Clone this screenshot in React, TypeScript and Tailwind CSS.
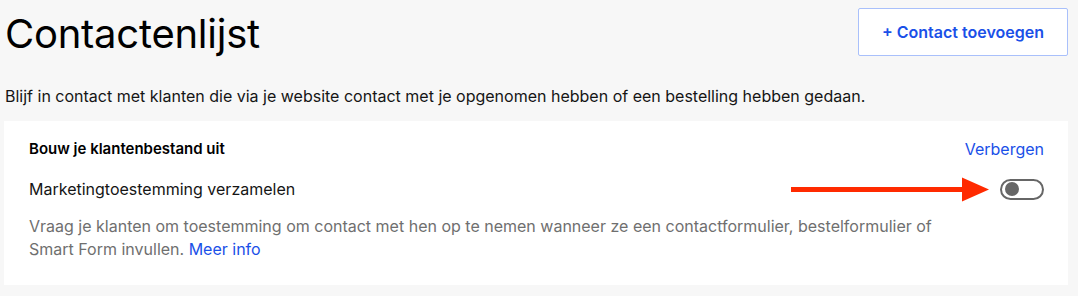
export default function App() {
  return (
    <div className="min-h-[296px] w-[1078px] bg-[#f7f7f7] font-['Inter',sans-serif] text-[#111]">
      <div className="flex items-start justify-between pl-[5px] pr-[10px] pt-[8px]">
        <h1 className="mt-[2px] text-[40px] leading-[48px] tracking-[-0.25px] text-black">Contactenlijst</h1>
        <button className="h-[48px] w-[210px] rounded-[2px] border border-[#a9c0fb] bg-white text-[16px] font-semibold text-[#1a50e8]">
          + Contact toevoegen
        </button>
      </div>
      <p className="mt-[27px] pl-[5px] text-[16px] leading-[22px] text-[#151515]">
        Blijf in contact met klanten die via je website contact met je opgenomen hebben of een bestelling hebben gedaan.
      </p>
      <div className="ml-[4px] mt-[14px] w-[1064px] bg-white pb-[24px] pl-[25px] pr-[24px] pt-[17px]">
        <div className="flex items-center justify-between">
          <h2 className="text-[15px] font-semibold leading-[22px] text-black">Bouw je klantenbestand uit</h2>
          <a className="text-[16px] leading-[22px] text-[#1a50e8]" href="#">
            Verbergen
          </a>
        </div>
        <div className="mt-[16px] flex items-center justify-between">
          <span className="text-[16px] leading-[22px] text-[#151515]">Marketingtoestemming verzamelen</span>
          <div className="flex items-center">
            <svg width="205" height="26" viewBox="0 0 205 26" className="mr-[4px]">
              <rect x="0" y="11" width="175" height="5" fill="#ff2a00" />
              <polygon points="171,1.5 198,13.5 171,25.5" fill="#ff2a00" />
            </svg>
            <div className="flex h-[21px] w-[44px] items-center rounded-full border-2 border-[#666] pl-[3px]">
              <div className="h-[14px] w-[14px] rounded-full bg-[#666]" />
            </div>
          </div>
        </div>
        <p className="mt-[13px] w-[940px] text-[16px] leading-[23px] text-[#6f6f6f]">
          Vraag je klanten om toestemming om contact met hen op te nemen wanneer ze een contactformulier, bestelformulier of
          Smart Form invullen.{' '}
          <a className="text-[#1a50e8]" href="#">
            Meer info
          </a>
        </p>
      </div>
    </div>
  )
}
